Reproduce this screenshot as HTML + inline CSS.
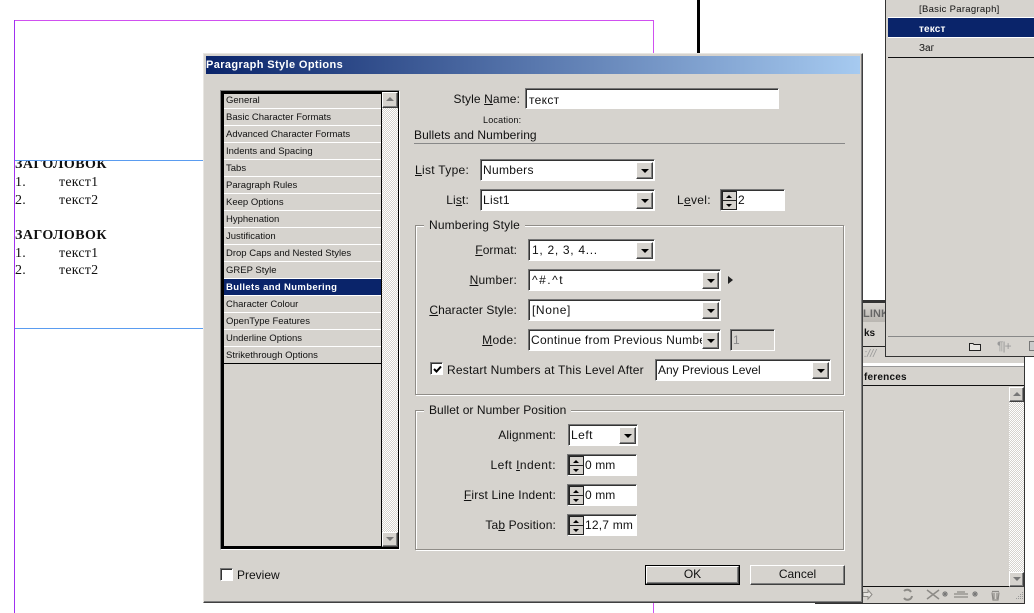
<!DOCTYPE html>
<html><head><meta charset="utf-8">
<style>
html,body{margin:0;padding:0;background:#fff}
#r{position:relative;width:1034px;height:613px;overflow:hidden;background:#fff;font-family:"Liberation Sans",sans-serif;color:#000}
#r div,#r span.t{position:absolute;box-sizing:border-box}
.t{font-size:12px;letter-spacing:.15px;line-height:14px;white-space:pre;color:#111}
.r{text-align:right}
u{text-decoration:underline}
.f{background:#fff;border:1px solid;border-color:#777 #fff #fff #777;box-shadow:inset 1px 1px 0 #333;font-size:12px;letter-spacing:.3px;line-height:18px;padding:1px 0 0 2px;white-space:pre;overflow:hidden;color:#111}
.b{background:#d6d3ce;border:1px solid;border-color:#fff #404040 #404040 #fff;box-shadow:inset -1px -1px 0 #808080}
.dd{width:17px;top:2px;bottom:1px;right:1px}
.dd:after{content:"";position:absolute;left:4px;top:6px;border-left:4px solid transparent;border-right:4px solid transparent;border-top:4px solid #000}
.sp{position:absolute;left:1px;width:15px;background:#d6d3ce;border:1px solid #222}
.up:after{content:"";position:absolute;left:3px;top:3px;border-left:3px solid transparent;border-right:3px solid transparent;border-bottom:3px solid #000}
.dn:after{content:"";position:absolute;left:3px;top:3px;border-left:3px solid transparent;border-right:3px solid transparent;border-top:3px solid #000}
.li{left:224px;width:157px;height:17px;border-bottom:1px solid #fff;font-size:9.5px;letter-spacing:0;line-height:18px;padding-left:2px;white-space:pre;color:#111}
.g{border:1px solid #908d88;box-shadow:1px 1px 0 #fff,inset 1px 1px 0 #fff}
.leg{background:#d6d3ce;padding:0 5px}
.ds{font-family:"Liberation Serif",serif;font-size:14px;line-height:16px;white-space:pre;color:#111;letter-spacing:.2px}
.bd{font-weight:bold;letter-spacing:.45px}
.chk{background:repeating-conic-gradient(#d6d3ce 0 25%,#fff 0 50%) 0 0/2px 2px}
.ic{font-size:12px;color:#888;line-height:14px;white-space:pre}
</style></head><body><div id="r">

<!-- document page -->
<div style="left:14px;top:20px;width:640px;height:600px;border:1px solid #d050f0;border-width:1px 1px 0 1px"></div>
<div style="left:14px;top:160px;width:190px;height:1px;background:#5a9cf0"></div>
<div style="left:14px;top:328px;width:190px;height:1px;background:#5a9cf0"></div>
<div style="left:14px;top:20px;width:1px;height:593px;background:#a030f0"></div>
<div class="ds bd" style="left:15px;top:161px;height:12px;overflow:hidden;width:100px"><span style="position:relative;top:-4px">ЗАГОЛОВОК</span></div>
<div class="ds" style="left:15px;top:175px">1.</div><div class="ds" style="left:59px;top:175px">текст1</div>
<div class="ds" style="left:15px;top:193px">2.</div><div class="ds" style="left:59px;top:193px">текст2</div>
<div class="ds bd" style="left:15px;top:228px">ЗАГОЛОВОК</div>
<div class="ds" style="left:15px;top:246px">1.</div><div class="ds" style="left:59px;top:246px">текст1</div>
<div class="ds" style="left:15px;top:263px">2.</div><div class="ds" style="left:59px;top:263px">текст2</div>
<div style="left:697px;top:0;width:3px;height:60px;background:#000"></div>

<!-- lower right panel -->
<div style="left:815px;top:300px;width:210px;height:304px;background:#d6d3ce;border-right:1px solid #333;border-bottom:1px solid #333"></div>
<div style="left:850px;top:300px;width:175px;height:3px;background:#333"></div>
<div style="left:850px;top:303px;width:174px;height:19px;background:linear-gradient(#d8d5d0,#b9b6b1)"></div>
<div style="left:863px;top:308px;font-size:11px;font-weight:bold;letter-spacing:.1px;color:#666;line-height:12px">LINK</div>
<div style="left:864px;top:328px;font-size:10px;font-weight:bold;line-height:12px;color:#111">ks</div>
<div style="left:850px;top:346px;width:174px;height:1px;background:#222"></div>
<div style="left:864px;top:348px;font-size:11px;color:#999;line-height:13px;font-style:italic">:///</div>
<div style="left:850px;top:363px;width:174px;height:3px;background:#fff"></div>
<div style="left:850px;top:366px;width:174px;height:1px;background:#999"></div>
<div style="left:864px;top:372px;font-size:10px;font-weight:bold;letter-spacing:.2px;line-height:12px;color:#111">ferences</div>
<div style="left:850px;top:385px;width:174px;height:1px;background:#111"></div>
<div class="chk" style="left:1009px;top:387px;width:15px;height:199px"></div>
<div class="b" style="left:1009px;top:387px;width:15px;height:15px"><div style="left:3px;top:4px;border-left:4px solid transparent;border-right:4px solid transparent;border-bottom:4px solid #777"></div></div>
<div class="b" style="left:1009px;top:572px;width:15px;height:15px"><div style="left:3px;top:4px;border-left:4px solid transparent;border-right:4px solid transparent;border-top:4px solid #777"></div></div>
<div style="left:850px;top:586px;width:159px;height:1px;background:#111"></div>
<svg style="position:absolute;left:862px;top:588px" width="150" height="14" fill="none" stroke="#8c8a86">
<path d="M1 4.500h5V2l4 4.500-4 4.500V8.500H1z" fill="#e6e4e0"/>
<path d="M42 3a4.500 4.500 0 0 1 7 1M50 8a4.500 4.500 0 0 1-8 2" stroke-width="2"/>
<path d="M65 2l12 9M77 2L65 11" stroke-width="1.500"/>
<path d="M83 3v6M80 6h6M81 4l4 4M85 4l-4 4" stroke="#777"/>
<path d="M92 6h14M92 9h14M95 4h8" stroke-width="1.200"/>
<path d="M113 3v6M110 6h6M111 4l4 4M115 4l-4 4" stroke="#777"/>
<path d="M130 3.500h7M130 4.500l1 7.500h5l1-7.500M132 5v6M135 5v6" stroke-width="1.200"/>
</svg>
<svg style="position:absolute;left:1013px;top:591px" width="11" height="11"><g fill="#999"><rect x="9" y="1" width="1" height="1"/><rect x="7" y="3" width="1" height="1"/><rect x="9" y="3" width="1" height="1"/><rect x="5" y="5" width="1" height="1"/><rect x="7" y="5" width="1" height="1"/><rect x="9" y="5" width="1" height="1"/><rect x="3" y="7" width="1" height="1"/><rect x="5" y="7" width="1" height="1"/><rect x="7" y="7" width="1" height="1"/><rect x="9" y="7" width="1" height="1"/></g></svg>

<!-- upper right panel -->
<div style="left:885px;top:0;width:149px;height:357px;background:#d6d3ce;border-left:1px solid #333;border-bottom:1px solid #333"></div>
<div style="left:888px;top:17px;width:146px;height:1px;background:#fff"></div>
<div style="left:888px;top:18px;width:146px;height:19px;background:#0a246a"></div>
<div style="left:888px;top:37px;width:146px;height:1px;background:#fff"></div>
<div style="left:888px;top:57px;width:146px;height:1px;background:#111"></div>
<div class="t" style="left:919px;top:3px;font-size:9.5px;letter-spacing:.3px">[Basic Paragraph]</div>
<div class="t" style="left:919px;top:23px;font-size:10px;font-weight:bold;color:#fff">текст</div>
<div class="t" style="left:919px;top:42px;font-size:10px;letter-spacing:0">Заг</div>
<div style="left:888px;top:336px;width:146px;height:1px;background:#888"></div>
<svg style="position:absolute;left:968px;top:340px" width="14" height="12"><path d="M1.500 3.500H5l1 1h6.500v6h-11z" fill="#e8e6e2" stroke="#222"/></svg>
<div class="ic" style="left:997px;top:339px;color:#999;letter-spacing:-1px">¶|+</div>
<svg style="position:absolute;left:1029px;top:340px" width="5" height="12"><rect x="0.500" y="1.500" width="6" height="9" fill="#ccc" stroke="#777"/></svg>

<!-- dialog -->
<div style="left:203px;top:53px;width:660px;height:550px;background:#d6d3ce;border:1px solid;border-color:#e8e6e2 #404040 #404040 #e8e6e2;box-shadow:inset -1px -1px 0 #808080"></div>
<div style="left:206px;top:56px;width:654px;height:18px;background:linear-gradient(90deg,#0a246a,#a6caf0)"></div>
<div class="t" style="left:206px;top:58px;font-size:11px;font-weight:bold;color:#fff;letter-spacing:.38px">Paragraph Style Options</div>

<!-- list -->
<div style="left:220px;top:90px;width:180px;height:460px;border:1px solid;border-color:#808080 #fff #fff #808080"></div>
<div style="left:221px;top:91px;width:178px;height:458px;border:3px solid #000;border-width:3px 1px 3px 3px"></div>
<div style="left:381px;top:93px;width:1px;height:454px;background:#000"></div>
<div style="left:222px;top:363px;width:159px;height:1px;background:#000"></div>
<div class="chk" style="left:382px;top:92px;width:16px;height:455px"></div>
<div class="b" style="left:382px;top:92px;width:16px;height:16px"><div style="left:3px;top:4px;border-left:4px solid transparent;border-right:4px solid transparent;border-bottom:4px solid #777"></div></div>
<div class="b" style="left:382px;top:532px;width:16px;height:15px"><div style="left:3px;top:4px;border-left:4px solid transparent;border-right:4px solid transparent;border-top:4px solid #777"></div></div>
<div class="li" style="top:92px">General</div>
<div class="li" style="top:109px">Basic Character Formats</div>
<div class="li" style="top:126px">Advanced Character Formats</div>
<div class="li" style="top:143px">Indents and Spacing</div>
<div class="li" style="top:160px">Tabs</div>
<div class="li" style="top:177px">Paragraph Rules</div>
<div class="li" style="top:194px">Keep Options</div>
<div class="li" style="top:211px">Hyphenation</div>
<div class="li" style="top:228px">Justification</div>
<div class="li" style="top:245px">Drop Caps and Nested Styles</div>
<div class="li" style="top:262px">GREP Style</div>
<div class="li" style="top:279px;background:#0a246a;color:#fff;font-weight:bold;letter-spacing:.35px">Bullets and Numbering</div>
<div class="li" style="top:296px">Character Colour</div>
<div class="li" style="top:313px">OpenType Features</div>
<div class="li" style="top:330px">Underline Options</div>
<div class="li" style="top:347px;border-bottom:0">Strikethrough Options</div>

<!-- top fields -->
<div class="t r" style="left:400px;width:120px;top:92px;letter-spacing:.1px">Style <u>N</u>ame:</div>
<div class="f" style="left:525px;top:88px;width:254px;height:21px;padding:2px 0 0 3px">текст</div>
<div class="t" style="left:483px;top:114px;font-size:9px;letter-spacing:.2px;line-height:12px">Location:</div>
<div class="t" style="left:414px;top:128px;letter-spacing:.06px">Bullets and Numbering</div>
<div style="left:414px;top:143px;width:431px;height:1px;background:#888"></div>

<div class="t" style="left:415px;top:163px;letter-spacing:.3px"><u>L</u>ist Type:</div>
<div class="f" style="left:480px;top:159px;width:175px;height:22px">Numbers<div class="b dd"></div></div>
<div class="t r" style="left:420px;width:49px;top:193px"> Li<u>s</u>t:</div>
<div class="f" style="left:480px;top:189px;width:175px;height:22px">List1<div class="b dd"></div></div>
<div class="t" style="left:677px;top:193px;letter-spacing:.3px">L<u>e</u>vel:</div>
<div class="f" style="left:720px;top:189px;width:65px;height:22px;padding-left:17px">2<div class="sp up" style="top:1px;height:10px"></div><div class="sp dn" style="top:10px;height:10px"></div></div>

<!-- Numbering Style -->
<div class="g" style="left:415px;top:225px;width:429px;height:170px"></div>
<div class="t leg" style="left:424px;top:218px">Numbering Style</div>
<div class="t r" style="left:420px;width:97px;top:243px;letter-spacing:.05px"><u>F</u>ormat:</div>
<div class="f" style="left:528px;top:239px;width:127px;height:22px;padding-left:3px;letter-spacing:.7px">1, 2, 3, 4...<div class="b dd"></div></div>
<div class="t r" style="left:420px;width:97px;top:273px;letter-spacing:.2px"><u>N</u>umber:</div>
<div class="f" style="left:528px;top:269px;width:193px;height:22px;padding-left:3px;letter-spacing:1.500px">^#.^t<div class="b dd"></div></div>
<svg style="position:absolute;left:726px;top:275px" width="9" height="10"><path d="M2 1l5 4-5 4z" fill="#222"/></svg>
<div class="t r" style="left:420px;width:97px;top:303px;letter-spacing:.1px"><u>C</u>haracter Style:</div>
<div class="f" style="left:528px;top:299px;width:193px;height:22px;padding-left:3px;letter-spacing:.6px">[None]<div class="b dd"></div></div>
<div class="t r" style="left:420px;width:97px;top:333px;letter-spacing:.3px"><u>M</u>ode:</div>
<div class="f" style="left:528px;top:329px;width:193px;height:22px;padding-right:18px;letter-spacing:.28px">Continue from Previous Numbe<div class="b dd"></div></div>
<div class="f" style="left:730px;top:329px;width:45px;height:22px;background:#d6d3ce;color:#888">1</div>
<div class="f" style="left:430px;top:362px;width:13px;height:13px;padding:0"><svg style="position:absolute;left:1px;top:1px" width="11" height="11"><path d="M2 5l2.500 2.500L9 2.500" fill="none" stroke="#000" stroke-width="2"/></svg></div>
<div class="t" style="left:447px;top:363px;letter-spacing:.2px">Restart Numbers at This Level After</div>
<div class="f" style="left:655px;top:359px;width:176px;height:22px;letter-spacing:0">Any Previous Level<div class="b dd"></div></div>

<!-- Position -->
<div class="g" style="left:415px;top:410px;width:429px;height:140px"></div>
<div class="t leg" style="left:424px;top:403px;letter-spacing:.05px">Bullet or Number Position</div>
<div class="t r" style="left:420px;width:136px;top:428px;letter-spacing:.1px">Ali<u>g</u>nment:</div>
<div class="f" style="left:568px;top:424px;width:70px;height:22px;letter-spacing:.5px">Left<div class="b dd"></div></div>
<div class="t r" style="left:420px;width:136px;top:458px;letter-spacing:.45px">Left <u>I</u>ndent:</div>
<div class="f" style="left:567px;top:454px;width:70px;height:22px;padding-left:17px;letter-spacing:.1px">0 mm<div class="sp up" style="top:1px;height:10px"></div><div class="sp dn" style="top:10px;height:10px"></div></div>
<div class="t r" style="left:420px;width:136px;top:488px"><u>F</u>irst Line Indent:</div>
<div class="f" style="left:567px;top:484px;width:70px;height:22px;padding-left:17px;letter-spacing:.1px">0 mm<div class="sp up" style="top:1px;height:10px"></div><div class="sp dn" style="top:10px;height:10px"></div></div>
<div class="t r" style="left:420px;width:136px;top:518px">Ta<u>b</u> Position:</div>
<div class="f" style="left:567px;top:514px;width:70px;height:22px;padding-left:17px;letter-spacing:.2px">12,7 mm<div class="sp up" style="top:1px;height:10px"></div><div class="sp dn" style="top:10px;height:10px"></div></div>

<!-- Preview -->
<div class="f" style="left:220px;top:568px;width:13px;height:13px;padding:0"></div>
<div class="t" style="left:237px;top:568px;letter-spacing:0">Preview</div>

<!-- buttons -->
<div style="left:645px;top:565px;width:95px;height:20px;border:1px solid #000"></div>
<div class="b t" style="left:646px;top:566px;width:93px;height:18px;text-align:center;line-height:15px;letter-spacing:0">OK</div>
<div class="b t" style="left:750px;top:565px;width:95px;height:20px;text-align:center;line-height:17px;letter-spacing:0">Cancel</div>

</div></body></html>
